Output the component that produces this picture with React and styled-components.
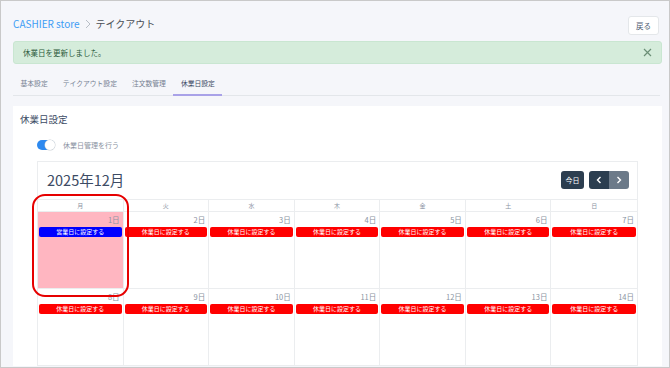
import React from 'react'
import styled, { createGlobalStyle } from 'styled-components'

const GlobalStyle = createGlobalStyle`
  html, body { margin: 0; padding: 0; }
  body {
    background: #ffffff;
    font-family: "Noto Sans CJK JP", "Noto Sans", sans-serif;
    color: #3c4b64;
  }
  * { box-sizing: border-box; }
`

const Frame = styled.div`
  width: 670px;
  height: 368px;
  border: 1px solid #c9c9c9;
  background: #f5f6fa;
  overflow: hidden;
  padding: 0 7px 0 12px;
`

const TopBar = styled.div`
  display: flex;
  justify-content: space-between;
  align-items: center;
  margin-top: 15px;
  height: 18px;
  padding-right: 3px;
`

const Crumbs = styled.div`
  display: flex;
  align-items: center;
  gap: 5px;
  font-size: 10px;
  line-height: 1;
  margin-top: -2px;
`

const CrumbLink = styled.span`
  color: #3d9df5;
`

const CrumbCurrent = styled.span`
  color: #4a4f57;
`

const BackButton = styled.button`
  width: 31px;
  height: 19px;
  background: #fff;
  border: 1px solid #e4e7ea;
  border-radius: 3px;
  font-family: inherit;
  font-size: 7.5px;
  color: #4f5d73;
  padding: 0;
`

const Alert = styled.div`
  margin-top: 7px;
  height: 23px;
  background: #d5ecdb;
  border: 1px solid #c9e6d1;
  border-radius: 3px;
  display: flex;
  align-items: center;
  justify-content: space-between;
  padding: 0 9px 0 9px;
  font-size: 7.5px;
  color: #2b5a3a;
`

const Tabs = styled.div`
  display: flex;
  margin-top: 8px;
  height: 24px;
  border-bottom: 1px solid #e3e6ea;
  margin-right: 2px;
`

const Tab = styled.div`
  padding: 0 7.5px;
  font-size: 6.8px;
  line-height: 23px;
  color: ${p => (p.$active ? '#3c4b64' : '#768192')};
  border-bottom: 2px solid ${p => (p.$active ? '#a9a2e8' : 'transparent')};
  margin-bottom: -1px;
`

const Card = styled.div`
  margin-top: 10px;
  background: #fff;
  padding: 6px 24px 0 7px;
`

const CardTitle = styled.div`
  font-size: 9.5px;
  color: #3c4b64;
  line-height: 14px;
`

const ToggleRow = styled.div`
  display: flex;
  align-items: center;
  gap: 8px;
  margin: 14px 0 0 17px;
  height: 10px;
`

const Toggle = styled.div`
  width: 18px;
  height: 10px;
  border-radius: 5px;
  background: #2d89ef;
  position: relative;
  &::after {
    content: '';
    position: absolute;
    right: 0px;
    top: 0px;
    width: 10px;
    height: 10px;
    border-radius: 50%;
    background: #fff;
    box-shadow: 0 0 0 0.5px #c8ced3;
  }
`

const ToggleLabel = styled.span`
  font-size: 7px;
  color: #8a93a2;
`

const Calendar = styled.div`
  margin: 11px 0 0 17px;
  border: 1px solid #ebedef;
  border-bottom: none;
`

const CalToolbar = styled.div`
  display: flex;
  align-items: center;
  justify-content: space-between;
  padding: 9px 8px 10px 9px;
`

const MonthTitle = styled.div`
  font-size: 14.5px;
  color: #3c4b64;
  line-height: 18px;
`

const NavGroup = styled.div`
  display: flex;
  gap: 5px;
`

const NavButtons = styled.div`
  display: flex;
  border-radius: 3px;
  overflow: hidden;
`

const NavButton = styled.button`
  height: 18px;
  width: ${p => p.$w || 20}px;
  border: none;
  padding: 0;
  background: ${p => (p.$light ? '#6c7a89' : '#2c3e50')};
  color: #fff;
  font-family: inherit;
  font-size: 7px;
  display: flex;
  align-items: center;
  justify-content: center;
  border-radius: ${p => (p.$round ? '3px' : '0')};
`

const Grid = styled.div`
  position: relative;
  display: grid;
  grid-template-columns: repeat(7, 1fr);
  border-top: 1px solid #ebedef;
`

const DayName = styled.div`
  height: 12px;
  font-size: 6px;
  line-height: 12px;
  text-align: center;
  color: #8a93a2;
  border-right: 1px solid #ebedef;
  border-bottom: 1px solid #ebedef;
  &:nth-child(7n) { border-right: none; }
`

const Cell = styled.div`
  height: 77px;
  background: ${p => (p.$closed ? '#ffb6c1' : '#fff')};
  border-right: 1px solid #ebedef;
  border-bottom: 1px solid #ebedef;
  padding: 2px 1px 0 1px;
  display: flex;
  flex-direction: column;
  &:nth-child(7n) { border-right: none; }
`

const DateNum = styled.div`
  text-align: right;
  font-size: 7.5px;
  color: #8a93a2;
  line-height: 11px;
  padding-right: 2px;
`

const DayButton = styled.div`
  margin-top: 2px;
  height: 10px;
  border-radius: 2px;
  background: ${p => (p.$open ? '#0000ff' : '#ff0000')};
  color: #fff;
  font-size: 6px;
  line-height: 10px;
  text-align: center;
`

// red marker drawn over the first column (header + 1st day)
const Ring = styled.div`
  position: absolute;
  left: -6px;
  top: -6px;
  width: 97px;
  height: 103px;
  border: 2px solid #e60000;
  border-radius: 13px;
  pointer-events: none;
`

const Chevron = ({ dir }) => (
  <svg width="6" height="8" viewBox="0 0 6 8">
    <path
      d={dir === 'left' ? 'M4.5 1 L1.5 4 L4.5 7' : 'M1.5 1 L4.5 4 L1.5 7'}
      fill="none"
      stroke="#fff"
      strokeWidth="1.4"
    />
  </svg>
)

const days = ['月', '火', '水', '木', '金', '土', '日']

export default function App() {
  return (
    <>
      <GlobalStyle />
      <Frame>
        <TopBar>
          <Crumbs>
            <CrumbLink>CASHIER store</CrumbLink>
            <svg width="6" height="10" viewBox="0 0 6 10">
              <path d="M1 1 L5 5 L1 9" fill="none" stroke="#b8bec6" strokeWidth="1" />
            </svg>
            <CrumbCurrent>テイクアウト</CrumbCurrent>
          </Crumbs>
          <BackButton>戻る</BackButton>
        </TopBar>
        <Alert>
          <span>休業日を更新しました。</span>
          <svg width="9" height="9" viewBox="0 0 9 9">
            <path d="M1 1 L8 8 M8 1 L1 8" stroke="#6b8f76" strokeWidth="1.2" />
          </svg>
        </Alert>
        <Tabs>
          <Tab>基本設定</Tab>
          <Tab>テイクアウト設定</Tab>
          <Tab>注文数管理</Tab>
          <Tab $active>休業日設定</Tab>
        </Tabs>
        <Card>
          <CardTitle>休業日設定</CardTitle>
          <ToggleRow>
            <Toggle />
            <ToggleLabel>休業日管理を行う</ToggleLabel>
          </ToggleRow>
          <Calendar>
            <CalToolbar>
              <MonthTitle>2025年12月</MonthTitle>
              <NavGroup>
                <NavButton $w={23} $round>今日</NavButton>
                <NavButtons>
                  <NavButton><Chevron dir="left" /></NavButton>
                  <NavButton $light><Chevron dir="right" /></NavButton>
                </NavButtons>
              </NavGroup>
            </CalToolbar>
            <Grid>
              {days.map(d => (
                <DayName key={d}>{d}</DayName>
              ))}
              {Array.from({ length: 14 }, (_, i) => {
                const n = i + 1
                const closed = n === 1
                return (
                  <Cell key={n} $closed={closed}>
                    <DateNum>{n}日</DateNum>
                    <DayButton $open={closed}>
                      {closed ? '営業日に設定する' : '休業日に設定する'}
                    </DayButton>
                  </Cell>
                )
              })}
              <Ring />
            </Grid>
          </Calendar>
        </Card>
      </Frame>
    </>
  )
}
